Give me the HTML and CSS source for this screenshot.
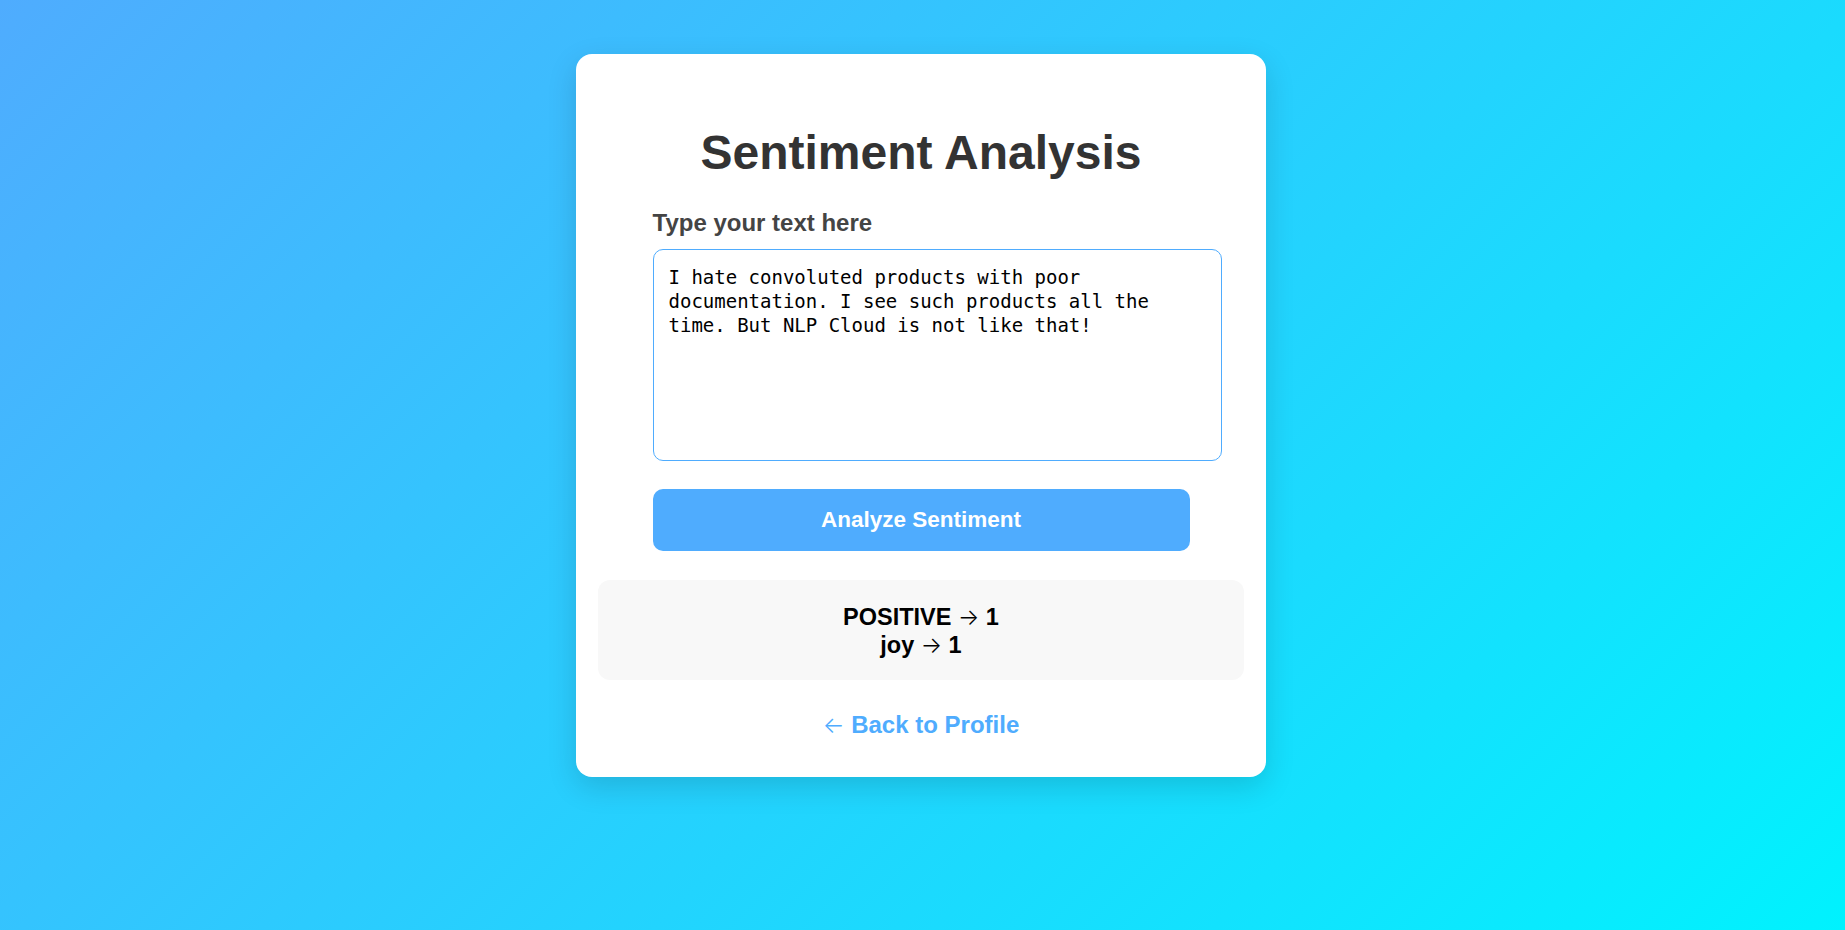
FILE: index.html
```html
<!DOCTYPE html>
<html lang="en">
<head>
<meta charset="utf-8">
<title>Sentiment Analysis</title>
<link rel="stylesheet" href="styles.css">
</head>
<body>
  <main class="card">
    <h1 class="title">Sentiment Analysis</h1>
    <form class="form">
      <label class="label" for="text">Type your text here</label>
      <textarea id="text" class="input">I hate convoluted products with poor documentation. I see such products all the time. But NLP Cloud is not like that!</textarea>
      <button type="button" class="button">Analyze Sentiment</button>
    </form>
    <div class="result">
      <div class="result-line">POSITIVE <span class="arrow">→</span> 1</div>
      <div class="result-line">joy <span class="arrow">→</span> 1</div>
    </div>
    <div class="back">
      <a class="back-link" href="#"><span class="arrow">←</span> Back to Profile</a>
    </div>
  </main>
</body>
</html>
```

FILE: styles.css
```css
html, body {
  margin: 0;
  padding: 0;
}

body {
  min-height: 100vh;
  box-sizing: border-box;
  padding-top: 54px;
  padding-right: 3px;
  background: linear-gradient(135deg, #4facfe 0%, #00f2fe 100%);
  font-family: "Liberation Sans", Arial, sans-serif;
  display: flex;
  justify-content: center;
  align-items: flex-start;
}

.card {
  width: 690px;
  box-sizing: border-box;
  padding: 71px 22px 38px;
  background: #ffffff;
  border-radius: 16px;
  box-shadow: 0 10px 30px rgba(0, 0, 0, 0.14);
}

.title {
  margin: 0;
  font-size: 48px;
  font-weight: bold;
  color: #333333;
  text-align: center;
}

.form {
  width: 537px;
  margin: 29px auto 0;
}

.label {
  display: block;
  font-size: 24px;
  font-weight: bold;
  color: #444444;
  margin-bottom: 12px;
}

.input {
  display: block;
  width: 100%;
  height: 180px;
  padding: 15px;
  margin: 0;
  border: 1px solid #4facfe;
  border-radius: 10px;
  font-family: "DejaVu Sans Mono", "Liberation Mono", monospace;
  font-size: 19px;
  line-height: 24px;
  color: #000000;
  background: #ffffff;
  resize: none;
  outline: none;
}

.button {
  display: block;
  width: 100%;
  height: 62px;
  margin-top: 28px;
  border: none;
  border-radius: 10px;
  background: #4facfe;
  color: #ffffff;
  font-family: "Liberation Sans", Arial, sans-serif;
  font-size: 22.5px;
  font-weight: bold;
  cursor: pointer;
}

.result {
  margin-top: 29px;
  padding: 23px 20px 21px;
  background: #f8f8f8;
  border-radius: 12px;
  text-align: center;
  font-size: 23.5px;
  font-weight: bold;
  color: #000000;
}

.result-line {
  line-height: 28px;
}

.arrow {
  font-family: Inter, "Noto Sans CJK SC", sans-serif;
  font-weight: 300;
  font-size: 0.95em;
}

.back {
  margin-top: 31px;
  text-align: center;
}

.back-link {
  font-size: 24px;
  font-weight: bold;
  color: #4facfe;
  text-decoration: none;
}
```
